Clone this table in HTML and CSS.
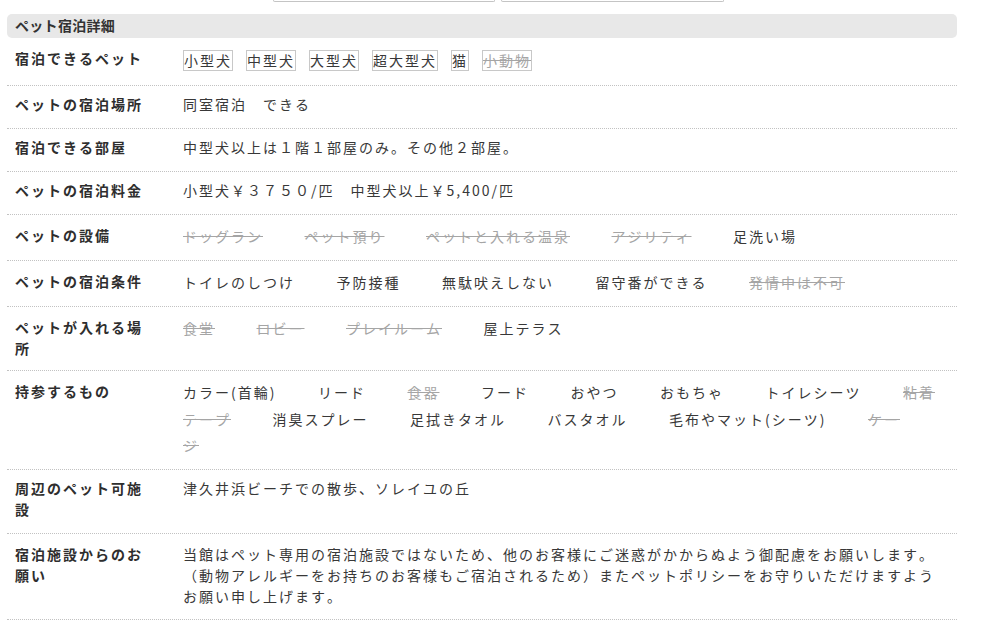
FILE: index.html
```html
<!DOCTYPE html>
<html lang="ja">
<head>
<meta charset="utf-8">
<title>ペット宿泊詳細</title>
<link rel="stylesheet" href="styles.css">
</head>
<body>
<div class="topbar"><span class="topbox topbox-a"></span><span class="topbox topbox-b"></span></div>
<section class="pet">
  <h2 class="pet-head">ペット宿泊詳細</h2>
  <div class="row row-list">
    <div class="label">宿泊できるペット</div>
    <div class="value tags"><span class="tag">小型犬</span><span class="tag">中型犬</span><span class="tag">大型犬</span><span class="tag">超大型犬</span><span class="tag">猫</span><span class="tag off">小動物</span></div>
  </div>
  <div class="row">
    <div class="label">ペットの宿泊場所</div>
    <div class="value">同室宿泊　できる</div>
  </div>
  <div class="row">
    <div class="label">宿泊できる部屋</div>
    <div class="value">中型犬以上は１階１部屋のみ。その他２部屋。</div>
  </div>
  <div class="row">
    <div class="label">ペットの宿泊料金</div>
    <div class="value">小型犬￥３７５０/匹　中型犬以上￥5,400/匹</div>
  </div>
  <div class="row row-list">
    <div class="label">ペットの設備</div>
    <div class="value list"><span class="item off">ドッグラン</span><span class="item off">ペット預り</span><span class="item off">ペットと入れる温泉</span><span class="item off">アジリティ</span><span class="item">足洗い場</span></div>
  </div>
  <div class="row row-list">
    <div class="label">ペットの宿泊条件</div>
    <div class="value list"><span class="item">トイレのしつけ</span><span class="item">予防接種</span><span class="item">無駄吠えしない</span><span class="item">留守番ができる</span><span class="item off">発情中は不可</span></div>
  </div>
  <div class="row row-list">
    <div class="label">ペットが入れる場所</div>
    <div class="value list"><span class="item off">食堂</span><span class="item off">ロビー</span><span class="item off">プレイルーム</span><span class="item">屋上テラス</span></div>
  </div>
  <div class="row row-list">
    <div class="label">持参するもの</div>
    <div class="value list"><span class="item">カラー(首輪)</span><span class="item">リード</span><span class="item off">食器</span><span class="item">フード</span><span class="item">おやつ</span><span class="item">おもちゃ</span><span class="item">トイレシーツ</span><span class="item off">粘着テープ</span><span class="item">消臭スプレー</span><span class="item">足拭きタオル</span><span class="item">バスタオル</span><span class="item">毛布やマット(シーツ)</span><span class="item off">ケージ</span></div>
  </div>
  <div class="row">
    <div class="label">周辺のペット可施設</div>
    <div class="value">津久井浜ビーチでの散歩、ソレイユの丘</div>
  </div>
  <div class="row row-note">
    <div class="label">宿泊施設からのお願い</div>
    <div class="value">当館はペット専用の宿泊施設ではないため、他のお客様にご迷惑がかからぬよう御配慮をお願いします。（動物アレルギーをお持ちのお客様もご宿泊されるため）またペットポリシーをお守りいただけますようお願い申し上げます。</div>
  </div>
</section>
</body>
</html>
```
FILE: styles.css
```css
html, body {
  margin: 0;
  padding: 0;
  background: #fff;
}
body {
  font-family: "Noto Sans CJK JP", "Noto Sans", sans-serif;
  font-size: 14px;
  color: #333;
  font-kerning: none;
}
.topbar {
  display: flex;
  gap: 6px;
  height: 3px;
  padding-left: 273px;
}
.topbox {
  display: block;
  height: 1px;
  border: 1px solid #c4c4c4;
  border-top: none;
  border-radius: 0 0 2px 2px;
}
.topbox-a { width: 220px; }
.topbox-b { width: 221px; }
.pet {
  width: 950px;
  margin: 11px 0 0 7px;
}
.pet-head {
  margin: 0;
  height: 24px;
  line-height: 22px;
  padding: 0 8px 2px;
  box-sizing: border-box;
  background: #e8e8e8;
  border-radius: 5px;
  font-size: 14px;
  font-weight: bold;
  color: #333;
  letter-spacing: 0.3px;
}
.row {
  display: flex;
  padding: 8px 10px 13px 8px;
  border-bottom: 1px dotted #c2c2c2;
}
.row-note {
  padding-top: 10px;
  padding-bottom: 12px;
}
.label {
  width: 140px;
  flex-shrink: 0;
  margin-right: 28px;
  font-weight: bold;
  line-height: 21px;
  letter-spacing: 2px;
  color: #2e2e2e;
}
.row-list .label {
  margin-top: 2px;
  margin-bottom: -2px;
}
.value {
  flex: 1;
  min-width: 0;
  line-height: 21px;
  letter-spacing: 2px;
  color: #383838;
}
.list {
  line-height: 26.5px;
  margin-bottom: -2.5px;
}
.tags {
  line-height: 26px;
}
.item {
  margin-right: 41.5px;
}
.off {
  color: #a5a5a5;
  text-decoration: line-through;
}
.tag {
  display: inline-block;
  line-height: 19px;
  border: 1px solid #c8c8c8;
  margin: 4px 13px 0 0;
  vertical-align: top;
}
```
